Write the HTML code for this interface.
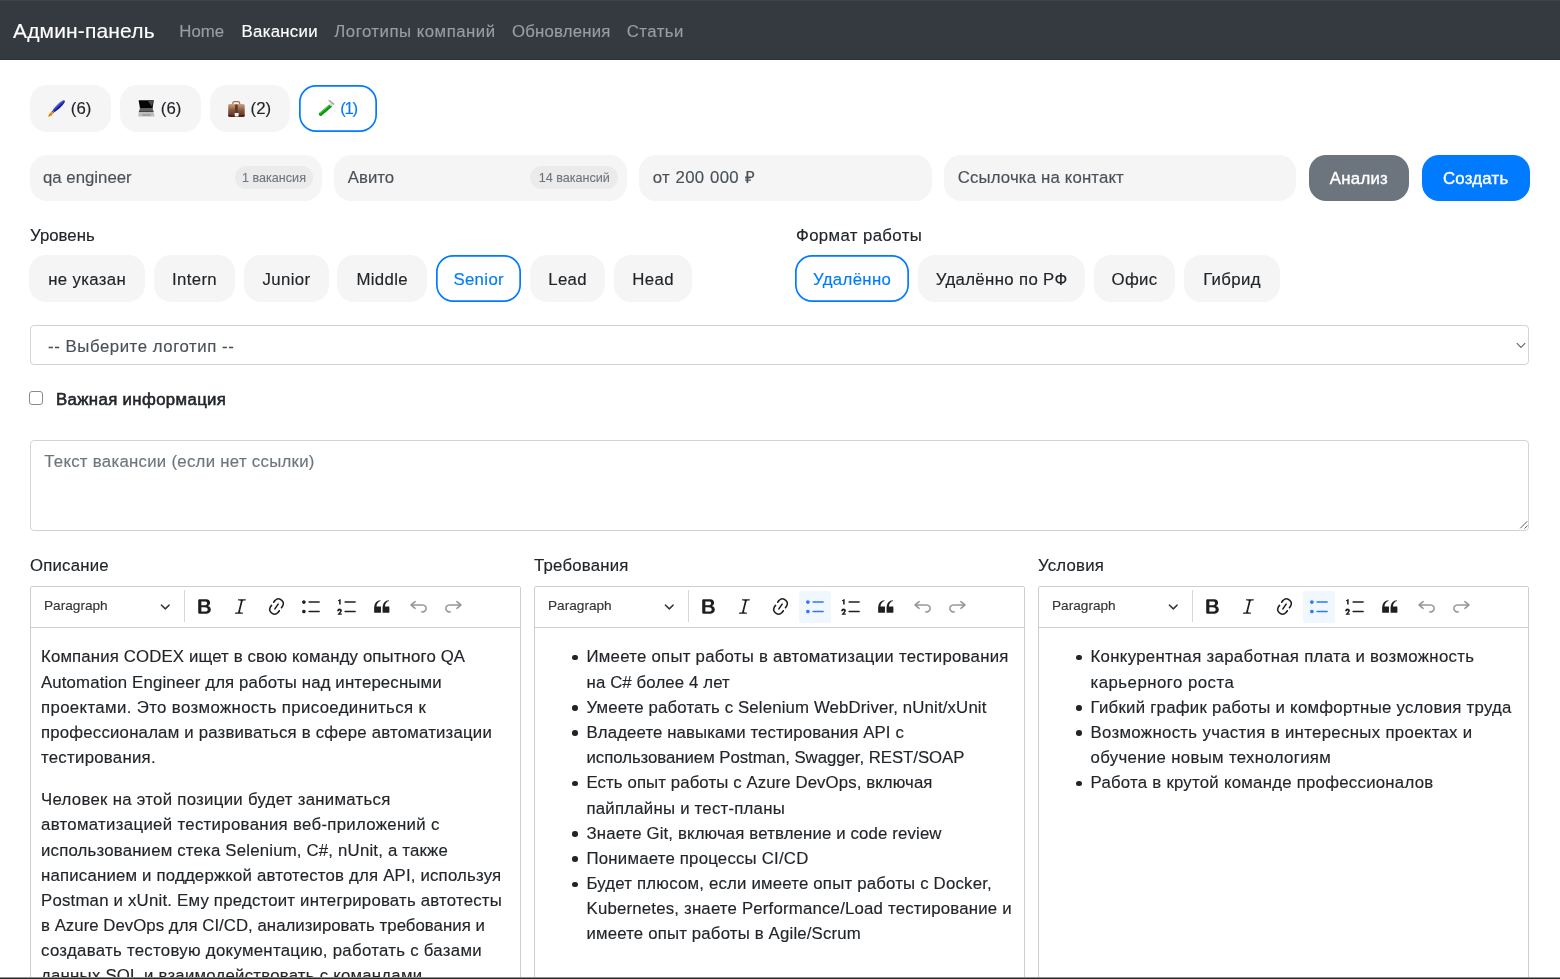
<!DOCTYPE html>
<html lang="ru">
<head>
<meta charset="utf-8">
<title>Админ-панель</title>
<style>
*{box-sizing:border-box;margin:0;padding:0}
html,body{width:1560px;height:979px;overflow:hidden;background:#fff}
body{font-family:"Liberation Sans",sans-serif;font-size:16.8px;color:#212529;position:relative;-webkit-text-stroke:.15px;paint-order:stroke fill}
.wrap{position:absolute;left:0;top:0;width:1560px;height:979px;overflow:hidden;will-change:transform}
.abs{position:absolute}
.nav{left:0;top:0;width:1560px;height:60px;background:#343a40;border-top:1px solid #414243;border-bottom:1px solid #2c3136}
.nav span{position:absolute;white-space:nowrap;line-height:20px}
.brand{left:13px;top:20px;font-size:21px;color:#fff}
.nl{top:21px;font-size:16.8px;color:#9a9da0}
.nl.act{color:#fff}
.pill{position:absolute;height:46px;border-radius:17px;background:#f5f5f5;display:flex;align-items:center;justify-content:center;white-space:nowrap;font-size:16.8px;color:#212529}
.pill.p2{top:255.300px;height:46.300px;padding-top:2.800px;letter-spacing:.350px}
.pill.sel{background:#fff;box-shadow:inset 0 0 0 1.7px #007bff;color:#007bff}
.pill .em{position:absolute;top:14.700px;width:17px;height:17px}
.pill .pt{position:absolute;top:1.3px;line-height:46.500px}
.inp{position:absolute;top:155px;height:45.7px;border-radius:17px;background:#f5f5f5;font-size:16.8px;color:#212529}
.inp .t{position:absolute;left:13.5px;top:13.100px;line-height:20px;white-space:nowrap;color:#495057}
.inp .b{position:absolute;right:9px;top:11.3px;height:23px;line-height:25px;text-align:center;-webkit-text-stroke:.1px;border-radius:11.5px;background:#ebebec;color:#6c757d;font-size:12.6px;white-space:nowrap}
.btn{position:absolute;top:154.700px;height:46.200px;border-radius:17px;color:#fff;display:flex;align-items:center;justify-content:center;font-size:16.8px;padding-top:2.800px;letter-spacing:.25px;-webkit-text-stroke:.4px}
.lbl{position:absolute;line-height:20px;white-space:nowrap;font-size:16.8px}
.sel-box{left:29.5px;top:324.5px;width:1499.500px;height:40.2px;border:1px solid #ced4da;border-radius:4px;background:#fff}
.ta{left:29.500px;top:440px;width:1499.500px;height:91px;border:1px solid #ced4da;border-radius:4px;background:#fff}
.ed{position:absolute;top:586px;width:491px;height:400px;border:1px solid #ccced1;border-radius:2px;background:#fff}
.ed .tb{position:absolute;left:0;top:0;width:100%;height:41px;border-bottom:1px solid #ccced1}
.ed .ct{position:absolute;left:0;top:42px;width:100%;font-size:16.8px;line-height:25.2px;white-space:nowrap;color:#212529}
.tb .pg{position:absolute;left:13px;top:10.3px;font-size:13.65px;line-height:18px;color:#333;white-space:nowrap}
.tb .chev{position:absolute;left:128.7px;top:14.4px;width:10.5px;height:10.5px;fill:#333}
.tb .sep{position:absolute;left:152.8px;top:3.300px;width:1px;height:32px;background:#d6d8db}
.tb .ic{position:absolute;top:8.7px;width:21px;height:21px;fill:#1f1f1f}
.tb .ic.dis{fill:#333;opacity:.5}
.tb .ic.act{fill:#2977ff}
.tb .on{position:absolute;top:4px;width:32px;height:32px;border-radius:2px;background:#f0f7ff}
.ct p{margin:0 0 16.8px 0}
.ct .ln{display:block;height:25.2px}
.ct{padding:15.4px 0 0 10px}
.ct ul{list-style:none;padding-left:41.500px}
.ct li{position:relative}
.ct li:before{content:"";position:absolute;left:-14.5px;top:10.5px;width:5.6px;height:5.6px;border-radius:50%;background:#212529}
.selchev{position:absolute;left:1484px;top:13px;width:12px;height:12px}
.cb{left:29.200px;top:391px;width:13.900px;height:13.900px;border:1px solid #8a8a8a;border-radius:3px;background:#fff}
.sb{-webkit-text-stroke:.55px #212529;letter-spacing:.36px}
.botline{left:0;top:977px;width:1560px;height:2px;background:linear-gradient(#8d8d8d 0,#8d8d8d 50%,#2b2b2b 50%)}
</style>
</head>
<body>
<div class="wrap">
<div class="abs nav">
<span class="brand" style="letter-spacing:.16px">Админ-панель</span>
<span class="nl" style="left:179.300px">Home</span>
<span class="nl act" style="left:241.500px;letter-spacing:.3px">Вакансии</span>
<span class="nl" style="left:334.300px;letter-spacing:.5px">Логотипы компаний</span>
<span class="nl" style="left:512px;letter-spacing:.2px">Обновления</span>
<span class="nl" style="left:626.800px;letter-spacing:.45px">Статьи</span>
</div>

<!-- tag pills -->
<div class="pill" style="left:29.5px;top:85px;width:81.3px;height:46.5px"><svg class="em" style="left:18.8px" viewBox="0 0 17 17"><defs><linearGradient id="gb" gradientUnits="userSpaceOnUse" x1="8.300" y1="3.300" x2="11.600" y2="7"><stop offset="0" stop-color="#b4c6fa"/><stop offset=".45" stop-color="#4a63de"/><stop offset="1" stop-color="#12128c"/></linearGradient></defs><path d="M4.600 10.300C7 6.500 12 1.300 15.500.3c1.500-.2 1.600 1.300.9 2.400C13.600 6.700 9.200 10.700 6.300 12Z" fill="url(#gb)"/><path d="M4.500 10.400 6.400 12.100 5.300 13.300 3.500 11.600Z" fill="#55534f"/><path d="M3.800 11.600 5.300 13C4.700 14.900 2.700 16.500.4 16.700.6 14.600 2 12.600 3.800 11.600Z" fill="#ee9418"/><path d="M2.300 13.300 3.700 14.600C2.900 15.600 1.700 16.400.4 16.700.7 15.400 1.400 14.200 2.300 13.300Z" fill="#d97a0a"/></svg><span class="pt" style="left:41.3px">(6)</span></div>
<div class="pill" style="left:119.5px;top:85px;width:81.3px;height:46.5px"><svg class="em" style="left:18.9px" viewBox="0 0 17 17"><defs><linearGradient id="gl" x1="0" y1="0" x2="1" y2="1"><stop offset="0" stop-color="#1a1a1a"/><stop offset="1" stop-color="#666"/></linearGradient></defs><path d="M.6.200H15.800L14.600 8.200H2Z" fill="#050505"/><path d="M9.800.9h5.300L14.200 6.800Z" fill="#4a4a4a"/><path d="M2 8.100H14.600L15.600 11.900H.8Z" fill="#5f5f5f"/><path d="M1 11.200H15.400l.2.800H.8Z" fill="#3a3a3a"/><path d="M.8 11.900H15.600L16.600 16.400H.2Z" fill="#bdbdbd"/><path d="M4.300 14.200h8.300v1.700H4.300Z" fill="#9e9e9e"/></svg><span class="pt" style="left:41.3px">(6)</span></div>
<div class="pill" style="left:209.6px;top:85px;width:80.8px;height:46.5px"><svg class="em" style="left:18.7px" viewBox="0 0 17 17"><defs><linearGradient id="gc" x1="0" y1="0" x2="0" y2="1"><stop offset="0" stop-color="#cfa180"/><stop offset=".5" stop-color="#85563e"/><stop offset="1" stop-color="#5c3020"/></linearGradient></defs><path d="M4.900 4.400V3q0-1.400 1.400-1.400h3.900q1.400 0 1.400 1.400v1.400" stroke="#a27353" stroke-width="1.300" fill="none"/><rect x=".2" y="4.100" width="16.500" height="12.600" rx="1.500" fill="url(#gc)"/><path d="M.2 15.200h16.500v.3q0 1.200-1.500 1.200H1.700Q.2 16.700.2 15.500Z" fill="#4a1508"/><rect x="7.100" y="4.500" width="2.600" height="8.800" rx="1" fill="#5a3a2a"/><rect x="6.700" y="13" width="3.900" height="3.500" rx=".4" fill="#f2f2f2"/></svg><span class="pt" style="left:41.0px">(2)</span></div>
<div class="pill sel" style="left:298.7px;top:85px;width:78.2px;height:46.5px"><svg class="em" style="left:19.3px" viewBox="0 0 17 17"><path d="M13.200 5 2.800 14" stroke="#eef3ee" stroke-width="4.200" stroke-linecap="round" fill="none"/><path d="M12.400 5.800 2.600 14.200" stroke="#0c9a0e" stroke-width="3.500" stroke-linecap="round" fill="none"/><path d="M10.800 5.600 2.300 12.900" stroke="#7fd283" stroke-width=".9" stroke-linecap="round" fill="none"/><path d="M11.300.7 15.500 4" stroke="#a9aaa9" stroke-width="1.700" stroke-linecap="round" fill="none"/><path d="M13.600 3.800 12 5.600" stroke="#d9ddd9" stroke-width="3" fill="none"/></svg><span class="pt" style="left:41.5px;letter-spacing:-1.3px">(1)</span></div>

<!-- inputs -->
<div class="inp" style="left:29.5px;width:292.5px"><span class="t">qa engineer</span><span class="b" style="width:78px">1 вакансия</span></div>
<div class="inp" style="left:334.3px;width:292.7px"><span class="t">Авито</span><span class="b" style="width:87.5px">14 вакансий</span></div>
<div class="inp" style="left:639.3px;width:292.7px"><span class="t" style="letter-spacing:.3px;word-spacing:.6px">от 200 000 ₽</span></div>
<div class="inp" style="left:944.400px;width:352px"><span class="t" style="left:13.300px;letter-spacing:.15px">Ссылочка на контакт</span></div>
<div class="btn" style="left:1308.700px;width:100.500px;background:#6c757d">Анализ</div>
<div class="btn" style="left:1421.700px;width:108px;background:#007bff">Создать</div>

<div class="lbl" style="left:30px;top:226.300px">Уровень</div>
<div class="lbl" style="left:796px;top:226.300px;letter-spacing:.38px">Формат работы</div>

<div class="pill p2" style="left:29.4px;width:115.6px">не указан</div>
<div class="pill p2" style="left:153.7px;width:81.7px">Intern</div>
<div class="pill p2" style="left:243.7px;width:85.6px">Junior</div>
<div class="pill p2" style="left:337.2px;width:90px">Middle</div>
<div class="pill p2 sel" style="left:436px;width:85.4px">Senior</div>
<div class="pill p2" style="left:530px;width:75.2px">Lead</div>
<div class="pill p2" style="left:614px;width:78.2px">Head</div>
<div class="pill p2 sel" style="left:795px;width:114.3px">Удалённо</div>
<div class="pill p2" style="left:918.3px;width:166.7px">Удалённо по РФ</div>
<div class="pill p2" style="left:1094px;width:81px">Офис</div>
<div class="pill p2" style="left:1184px;width:96px">Гибрид</div>

<div class="abs sel-box"><span class="lbl" style="left:17.500px;top:11.300px;color:#495057;letter-spacing:.56px">-- Выберите логотип --</span><svg class="selchev" viewBox="0 0 10 10"><path d="M1.500 3.500 5 7l3.500-3.500" fill="none" stroke="#63686e" stroke-width=".95" stroke-linecap="butt" stroke-linejoin="miter"/></svg></div>

<div class="abs cb"></div>
<div class="lbl sb" style="left:56px;top:390.200px">Важная информация</div>

<div class="abs ta"><span class="lbl" style="left:13.700px;top:11px;color:#6c757d;letter-spacing:.28px">Текст вакансии (если нет ссылки)</span><svg style="position:absolute;left:1486px;top:77px;width:12px;height:12px" viewBox="0 0 12 12"><path d="M3.300 10.300 10.300 3.200M7.500 10.500l3-2.800" stroke="#4a4a4a" stroke-width=".9" fill="none"/></svg></div>

<div class="lbl" style="left:30px;top:556.300px;letter-spacing:.2px">Описание</div>
<div class="lbl" style="left:534px;top:556.300px;letter-spacing:.2px">Требования</div>
<div class="lbl" style="left:1038px;top:556.300px;letter-spacing:.2px">Условия</div>

<div class="ed" style="left:30px"><div class="tb"><span class="pg">Paragraph</span><svg class="chev" viewBox="0 0 10 10"><path d="M.941 4.523a.75.75 0 1 1 1.06-1.06l3.006 3.005 3.005-3.005a.75.75 0 1 1 1.06 1.06l-3.549 3.55a.75.75 0 0 1-1.168-.136L.941 4.523z"/></svg><i class="sep"></i><svg class="ic" style="left:163.0px" viewBox="0 0 20 20"><path d="M10.187 17H5.773c-.637 0-1.092-.138-1.364-.415-.273-.277-.409-.718-.409-1.323V4.738c0-.617.14-1.062.419-1.332.279-.27.73-.406 1.354-.406h4.68c.69 0 1.288.041 1.793.124.506.083.96.242 1.36.478.341.197.644.447.906.75a3.262 3.262 0 0 1 .808 2.162c0 1.401-.722 2.426-2.167 3.075C15.05 10.175 16 11.315 16 13.01a3.756 3.756 0 0 1-2.296 3.504 6.1 6.1 0 0 1-1.517.377c-.571.073-1.238.11-2 .11zm-.217-6.217H7v4.087h3.069c1.977 0 2.965-.69 2.965-2.072 0-.707-.256-1.22-.768-1.537-.512-.319-1.277-.478-2.296-.478zM7 5.13v3.619h2.606c.729 0 1.292-.067 1.69-.2a1.6 1.6 0 0 0 .91-.765c.165-.267.247-.566.247-.897 0-.707-.26-1.176-.778-1.409-.519-.232-1.31-.348-2.375-.348H7z"/></svg><svg class="ic" style="left:198.7px" viewBox="0 0 20 20"><path d="m9.586 14.633.021.004c-.036.335.095.655.393.962.082.083.173.15.274.201h1.474a.6.6 0 1 1 0 1.2H5.304a.6.6 0 0 1 0-1.2h1.15c.474-.07.809-.182 1.005-.334.157-.122.291-.32.404-.597l2.416-9.55a1.053 1.053 0 0 0-.281-.823 1.12 1.12 0 0 0-.442-.296H8.15a.6.6 0 0 1 0-1.2h6.443a.6.6 0 1 1 0 1.2h-1.195c-.376.056-.65.155-.823.296-.215.175-.423.439-.623.79l-2.366 9.347z"/></svg><svg class="ic" style="left:235.2px" viewBox="0 0 20 20"><path d="m11.077 15 .991-1.416a.75.75 0 1 1 1.229.86l-1.148 1.64a.748.748 0 0 1-.217.206 5.251 5.251 0 0 1-8.503-5.955.741.741 0 0 1 .12-.274l1.147-1.639a.75.75 0 1 1 1.228.86L4.933 10.7l.006.003a3.75 3.75 0 0 0 6.132 4.294l.006.004zm5.494-5.335a.748.748 0 0 1-.12.274l-1.147 1.639a.75.75 0 1 1-1.228-.86l.86-1.23a3.75 3.75 0 0 0-6.144-4.301l-.86 1.229a.75.75 0 0 1-1.229-.86l1.148-1.64a.748.748 0 0 1 .217-.206 5.251 5.251 0 0 1 8.503 5.955zm-4.563-2.532a.75.75 0 0 1 .184 1.045l-3.155 4.505a.75.75 0 1 1-1.229-.86l3.155-4.506a.75.75 0 0 1 1.045-.184z"/></svg><svg class="ic" style="left:270.0px" viewBox="0 0 20 20"><path d="M7 5.75c0 .414.336.75.75.75h9.5a.75.75 0 1 0 0-1.5h-9.5a.75.75 0 0 0-.75.75zm-6 0C1 4.784 1.777 4 2.75 4c.966 0 1.75.777 1.75 1.75 0 .966-.777 1.75-1.75 1.75C1.784 7.5 1 6.723 1 5.75zm6 9c0 .414.336.75.75.75h9.5a.75.75 0 1 0 0-1.5h-9.5a.75.75 0 0 0-.75.75zm-6 0c0-.966.777-1.75 1.75-1.75.966 0 1.75.777 1.75 1.75 0 .966-.777 1.75-1.75 1.75C1.784 16.5 1 15.723 1 14.75z"/></svg><svg class="ic" style="left:305.7px" viewBox="0 0 20 20"><path d="M7 5.75c0 .414.336.75.75.75h9.5a.75.75 0 1 0 0-1.5h-9.5a.75.75 0 0 0-.75.75zM3.5 3v5H2V4.7H1v-1h.5c.5 0 .75-.25.75-.7H3.5zM.343 17.857l2.59-3.257H2.92a.6.6 0 1 0-1.04 0H.259a2.2 2.2 0 1 1 4.324 0L4.58 14.6l-1.55 2h1.555l-.001 1.257H.343zM7 14.75c0 .414.336.75.75.75h9.5a.75.75 0 1 0 0-1.5h-9.5a.75.75 0 0 0-.75.75z"/></svg><svg class="ic" style="left:340.2px" viewBox="0 0 20 20"><path d="M3 10.423a6.5 6.5 0 0 1 6.056-6.408l.038.67C6.448 5.423 5.354 7.663 5.22 10H9c.552 0 .5.432.5.986v4.511c0 .554-.448.503-1 .503h-5c-.552 0-.5-.449-.5-1.003v-4.574zm8 0a6.5 6.5 0 0 1 6.056-6.408l.038.67C14.448 5.423 13.354 7.663 13.22 10H17c.552 0 .5.432.5.986v4.511c0 .554-.448.503-1 .503h-5c-.552 0-.5-.449-.5-1.003v-4.574z"/></svg><svg class="ic dis" style="left:376.7px" viewBox="0 0 20 20"><path d="m5.042 9.367 2.189 1.837a.75.75 0 0 1-.965 1.149l-3.788-3.18a.747.747 0 0 1-.21-.284.75.75 0 0 1 .17-.945L6.23 4.762a.75.75 0 1 1 .964 1.15L4.863 7.866h8.917A.75.75 0 0 1 14 7.9a4 4 0 1 1-1.477 7.718l.344-1.489a2.5 2.5 0 1 0 1.094-4.73l.008-.032H5.042z"/></svg><svg class="ic dis" style="left:412.3px" viewBox="0 0 20 20"><path d="m14.958 9.367-2.189 1.837a.75.75 0 0 0 .965 1.149l3.788-3.18a.747.747 0 0 0 .21-.284.75.75 0 0 0-.17-.945L13.770 4.762a.75.75 0 1 0-.964 1.15l2.331 1.955H6.22A.75.75 0 0 0 6 7.9a4 4 0 1 0 1.477 7.718l-.344-1.489A2.5 2.5 0 1 1 6.039 9.4l-.008-.032h8.927z"/></svg></div><div class="ct"><p><span class="ln" style="letter-spacing:0.139px">Компания CODEX ищет в свою команду опытного QA</span><span class="ln" style="letter-spacing:0.141px">Automation Engineer для работы над интересными</span><span class="ln" style="letter-spacing:0.371px">проектами. Это возможность присоединиться к</span><span class="ln" style="letter-spacing:0.196px">профессионалам и развиваться в сфере автоматизации</span><span class="ln" style="letter-spacing:0.270px">тестирования.</span></p><p><span class="ln" style="letter-spacing:0.289px">Человек на этой позиции будет заниматься</span><span class="ln" style="letter-spacing:0.318px">автоматизацией тестирования веб-приложений с</span><span class="ln" style="letter-spacing:0.190px">использованием стека Selenium, C#, nUnit, а также</span><span class="ln" style="letter-spacing:0.190px">написанием и поддержкой автотестов для API, используя</span><span class="ln" style="letter-spacing:0.210px">Postman и xUnit. Ему предстоит интегрировать автотесты</span><span class="ln" style="letter-spacing:0.031px">в Azure DevOps для CI/CD, анализировать требования и</span><span class="ln" style="letter-spacing:0.297px">создавать тестовую документацию, работать с базами</span><span class="ln" style="letter-spacing:0.231px">данных SQL и взаимодействовать с командами</span></p></div></div>
<div class="ed" style="left:534px"><div class="tb"><span class="pg">Paragraph</span><svg class="chev" viewBox="0 0 10 10"><path d="M.941 4.523a.75.75 0 1 1 1.06-1.06l3.006 3.005 3.005-3.005a.75.75 0 1 1 1.06 1.06l-3.549 3.55a.75.75 0 0 1-1.168-.136L.941 4.523z"/></svg><i class="sep"></i><svg class="ic" style="left:163.0px" viewBox="0 0 20 20"><path d="M10.187 17H5.773c-.637 0-1.092-.138-1.364-.415-.273-.277-.409-.718-.409-1.323V4.738c0-.617.14-1.062.419-1.332.279-.27.73-.406 1.354-.406h4.68c.69 0 1.288.041 1.793.124.506.083.96.242 1.36.478.341.197.644.447.906.75a3.262 3.262 0 0 1 .808 2.162c0 1.401-.722 2.426-2.167 3.075C15.05 10.175 16 11.315 16 13.01a3.756 3.756 0 0 1-2.296 3.504 6.1 6.1 0 0 1-1.517.377c-.571.073-1.238.11-2 .11zm-.217-6.217H7v4.087h3.069c1.977 0 2.965-.69 2.965-2.072 0-.707-.256-1.22-.768-1.537-.512-.319-1.277-.478-2.296-.478zM7 5.13v3.619h2.606c.729 0 1.292-.067 1.69-.2a1.6 1.6 0 0 0 .91-.765c.165-.267.247-.566.247-.897 0-.707-.26-1.176-.778-1.409-.519-.232-1.31-.348-2.375-.348H7z"/></svg><svg class="ic" style="left:198.7px" viewBox="0 0 20 20"><path d="m9.586 14.633.021.004c-.036.335.095.655.393.962.082.083.173.15.274.201h1.474a.6.6 0 1 1 0 1.2H5.304a.6.6 0 0 1 0-1.2h1.15c.474-.07.809-.182 1.005-.334.157-.122.291-.32.404-.597l2.416-9.55a1.053 1.053 0 0 0-.281-.823 1.12 1.12 0 0 0-.442-.296H8.15a.6.6 0 0 1 0-1.2h6.443a.6.6 0 1 1 0 1.2h-1.195c-.376.056-.65.155-.823.296-.215.175-.423.439-.623.79l-2.366 9.347z"/></svg><svg class="ic" style="left:235.2px" viewBox="0 0 20 20"><path d="m11.077 15 .991-1.416a.75.75 0 1 1 1.229.86l-1.148 1.64a.748.748 0 0 1-.217.206 5.251 5.251 0 0 1-8.503-5.955.741.741 0 0 1 .12-.274l1.147-1.639a.75.75 0 1 1 1.228.86L4.933 10.7l.006.003a3.75 3.75 0 0 0 6.132 4.294l.006.004zm5.494-5.335a.748.748 0 0 1-.12.274l-1.147 1.639a.75.75 0 1 1-1.228-.86l.86-1.23a3.75 3.75 0 0 0-6.144-4.301l-.86 1.229a.75.75 0 0 1-1.229-.86l1.148-1.64a.748.748 0 0 1 .217-.206 5.251 5.251 0 0 1 8.503 5.955zm-4.563-2.532a.75.75 0 0 1 .184 1.045l-3.155 4.505a.75.75 0 1 1-1.229-.86l3.155-4.506a.75.75 0 0 1 1.045-.184z"/></svg><i class="on" style="left:264.4px"></i><svg class="ic act" style="left:270.0px" viewBox="0 0 20 20"><path d="M7 5.75c0 .414.336.75.75.75h9.5a.75.75 0 1 0 0-1.5h-9.5a.75.75 0 0 0-.75.75zm-6 0C1 4.784 1.777 4 2.75 4c.966 0 1.75.777 1.75 1.75 0 .966-.777 1.75-1.75 1.75C1.784 7.5 1 6.723 1 5.75zm6 9c0 .414.336.75.75.75h9.5a.75.75 0 1 0 0-1.5h-9.5a.75.75 0 0 0-.75.75zm-6 0c0-.966.777-1.75 1.75-1.75.966 0 1.75.777 1.75 1.75 0 .966-.777 1.75-1.75 1.75C1.784 16.5 1 15.723 1 14.75z"/></svg><svg class="ic" style="left:305.7px" viewBox="0 0 20 20"><path d="M7 5.75c0 .414.336.75.75.75h9.5a.75.75 0 1 0 0-1.5h-9.5a.75.75 0 0 0-.75.75zM3.5 3v5H2V4.7H1v-1h.5c.5 0 .75-.25.75-.7H3.5zM.343 17.857l2.59-3.257H2.92a.6.6 0 1 0-1.04 0H.259a2.2 2.2 0 1 1 4.324 0L4.58 14.6l-1.55 2h1.555l-.001 1.257H.343zM7 14.75c0 .414.336.75.75.75h9.5a.75.75 0 1 0 0-1.5h-9.5a.75.75 0 0 0-.75.75z"/></svg><svg class="ic" style="left:340.2px" viewBox="0 0 20 20"><path d="M3 10.423a6.5 6.5 0 0 1 6.056-6.408l.038.67C6.448 5.423 5.354 7.663 5.22 10H9c.552 0 .5.432.5.986v4.511c0 .554-.448.503-1 .503h-5c-.552 0-.5-.449-.5-1.003v-4.574zm8 0a6.5 6.5 0 0 1 6.056-6.408l.038.67C14.448 5.423 13.354 7.663 13.22 10H17c.552 0 .5.432.5.986v4.511c0 .554-.448.503-1 .503h-5c-.552 0-.5-.449-.5-1.003v-4.574z"/></svg><svg class="ic dis" style="left:376.7px" viewBox="0 0 20 20"><path d="m5.042 9.367 2.189 1.837a.75.75 0 0 1-.965 1.149l-3.788-3.18a.747.747 0 0 1-.21-.284.75.75 0 0 1 .17-.945L6.23 4.762a.75.75 0 1 1 .964 1.15L4.863 7.866h8.917A.75.75 0 0 1 14 7.9a4 4 0 1 1-1.477 7.718l.344-1.489a2.5 2.5 0 1 0 1.094-4.73l.008-.032H5.042z"/></svg><svg class="ic dis" style="left:412.3px" viewBox="0 0 20 20"><path d="m14.958 9.367-2.189 1.837a.75.75 0 0 0 .965 1.149l3.788-3.18a.747.747 0 0 0 .21-.284.75.75 0 0 0-.17-.945L13.770 4.762a.75.75 0 1 0-.964 1.15l2.331 1.955H6.22A.75.75 0 0 0 6 7.9a4 4 0 1 0 1.477 7.718l-.344-1.489A2.5 2.5 0 1 1 6.039 9.4l-.008-.032h8.927z"/></svg></div><div class="ct"><ul><li><span class="ln" style="letter-spacing:0.252px">Имеете опыт работы в автоматизации тестирования</span><span class="ln" style="letter-spacing:0.123px">на C# более 4 лет</span></li><li><span class="ln" style="letter-spacing:0.145px">Умеете работать с Selenium WebDriver, nUnit/xUnit</span></li><li><span class="ln" style="letter-spacing:0.111px">Владеете навыками тестирования API с</span><span class="ln" style="letter-spacing:-0.043px">использованием Postman, Swagger, REST/SOAP</span></li><li><span class="ln" style="letter-spacing:0.098px">Есть опыт работы с Azure DevOps, включая</span><span class="ln" style="letter-spacing:0.226px">пайплайны и тест-планы</span></li><li><span class="ln" style="letter-spacing:0.140px">Знаете Git, включая ветвление и code review</span></li><li><span class="ln" style="letter-spacing:0.214px">Понимаете процессы CI/CD</span></li><li><span class="ln" style="letter-spacing:0.197px">Будет плюсом, если имеете опыт работы с Docker,</span><span class="ln" style="letter-spacing:0.195px">Kubernetes, знаете Performance/Load тестирование и</span><span class="ln" style="letter-spacing:0.169px">имеете опыт работы в Agile/Scrum</span></li></ul></div></div>
<div class="ed" style="left:1038px"><div class="tb"><span class="pg">Paragraph</span><svg class="chev" viewBox="0 0 10 10"><path d="M.941 4.523a.75.75 0 1 1 1.06-1.06l3.006 3.005 3.005-3.005a.75.75 0 1 1 1.06 1.06l-3.549 3.55a.75.75 0 0 1-1.168-.136L.941 4.523z"/></svg><i class="sep"></i><svg class="ic" style="left:163.0px" viewBox="0 0 20 20"><path d="M10.187 17H5.773c-.637 0-1.092-.138-1.364-.415-.273-.277-.409-.718-.409-1.323V4.738c0-.617.14-1.062.419-1.332.279-.27.73-.406 1.354-.406h4.68c.69 0 1.288.041 1.793.124.506.083.96.242 1.36.478.341.197.644.447.906.75a3.262 3.262 0 0 1 .808 2.162c0 1.401-.722 2.426-2.167 3.075C15.05 10.175 16 11.315 16 13.01a3.756 3.756 0 0 1-2.296 3.504 6.1 6.1 0 0 1-1.517.377c-.571.073-1.238.11-2 .11zm-.217-6.217H7v4.087h3.069c1.977 0 2.965-.69 2.965-2.072 0-.707-.256-1.22-.768-1.537-.512-.319-1.277-.478-2.296-.478zM7 5.13v3.619h2.606c.729 0 1.292-.067 1.69-.2a1.6 1.6 0 0 0 .91-.765c.165-.267.247-.566.247-.897 0-.707-.26-1.176-.778-1.409-.519-.232-1.31-.348-2.375-.348H7z"/></svg><svg class="ic" style="left:198.7px" viewBox="0 0 20 20"><path d="m9.586 14.633.021.004c-.036.335.095.655.393.962.082.083.173.15.274.201h1.474a.6.6 0 1 1 0 1.2H5.304a.6.6 0 0 1 0-1.2h1.15c.474-.07.809-.182 1.005-.334.157-.122.291-.32.404-.597l2.416-9.55a1.053 1.053 0 0 0-.281-.823 1.12 1.12 0 0 0-.442-.296H8.15a.6.6 0 0 1 0-1.2h6.443a.6.6 0 1 1 0 1.2h-1.195c-.376.056-.65.155-.823.296-.215.175-.423.439-.623.79l-2.366 9.347z"/></svg><svg class="ic" style="left:235.2px" viewBox="0 0 20 20"><path d="m11.077 15 .991-1.416a.75.75 0 1 1 1.229.86l-1.148 1.64a.748.748 0 0 1-.217.206 5.251 5.251 0 0 1-8.503-5.955.741.741 0 0 1 .12-.274l1.147-1.639a.75.75 0 1 1 1.228.86L4.933 10.7l.006.003a3.75 3.75 0 0 0 6.132 4.294l.006.004zm5.494-5.335a.748.748 0 0 1-.12.274l-1.147 1.639a.75.75 0 1 1-1.228-.86l.86-1.23a3.75 3.75 0 0 0-6.144-4.301l-.86 1.229a.75.75 0 0 1-1.229-.86l1.148-1.64a.748.748 0 0 1 .217-.206 5.251 5.251 0 0 1 8.503 5.955zm-4.563-2.532a.75.75 0 0 1 .184 1.045l-3.155 4.505a.75.75 0 1 1-1.229-.86l3.155-4.506a.75.75 0 0 1 1.045-.184z"/></svg><i class="on" style="left:264.4px"></i><svg class="ic act" style="left:270.0px" viewBox="0 0 20 20"><path d="M7 5.75c0 .414.336.75.75.75h9.5a.75.75 0 1 0 0-1.5h-9.5a.75.75 0 0 0-.75.75zm-6 0C1 4.784 1.777 4 2.75 4c.966 0 1.75.777 1.75 1.75 0 .966-.777 1.75-1.75 1.75C1.784 7.5 1 6.723 1 5.75zm6 9c0 .414.336.75.75.75h9.5a.75.75 0 1 0 0-1.5h-9.5a.75.75 0 0 0-.75.75zm-6 0c0-.966.777-1.75 1.75-1.75.966 0 1.75.777 1.75 1.75 0 .966-.777 1.75-1.75 1.75C1.784 16.5 1 15.723 1 14.75z"/></svg><svg class="ic" style="left:305.7px" viewBox="0 0 20 20"><path d="M7 5.75c0 .414.336.75.75.75h9.5a.75.75 0 1 0 0-1.5h-9.5a.75.75 0 0 0-.75.75zM3.5 3v5H2V4.7H1v-1h.5c.5 0 .75-.25.75-.7H3.5zM.343 17.857l2.59-3.257H2.92a.6.6 0 1 0-1.04 0H.259a2.2 2.2 0 1 1 4.324 0L4.58 14.6l-1.55 2h1.555l-.001 1.257H.343zM7 14.75c0 .414.336.75.75.75h9.5a.75.75 0 1 0 0-1.5h-9.5a.75.75 0 0 0-.75.75z"/></svg><svg class="ic" style="left:340.2px" viewBox="0 0 20 20"><path d="M3 10.423a6.5 6.5 0 0 1 6.056-6.408l.038.67C6.448 5.423 5.354 7.663 5.22 10H9c.552 0 .5.432.5.986v4.511c0 .554-.448.503-1 .503h-5c-.552 0-.5-.449-.5-1.003v-4.574zm8 0a6.5 6.5 0 0 1 6.056-6.408l.038.67C14.448 5.423 13.354 7.663 13.22 10H17c.552 0 .5.432.5.986v4.511c0 .554-.448.503-1 .503h-5c-.552 0-.5-.449-.5-1.003v-4.574z"/></svg><svg class="ic dis" style="left:376.7px" viewBox="0 0 20 20"><path d="m5.042 9.367 2.189 1.837a.75.75 0 0 1-.965 1.149l-3.788-3.18a.747.747 0 0 1-.21-.284.75.75 0 0 1 .17-.945L6.23 4.762a.75.75 0 1 1 .964 1.15L4.863 7.866h8.917A.75.75 0 0 1 14 7.9a4 4 0 1 1-1.477 7.718l.344-1.489a2.5 2.5 0 1 0 1.094-4.73l.008-.032H5.042z"/></svg><svg class="ic dis" style="left:412.3px" viewBox="0 0 20 20"><path d="m14.958 9.367-2.189 1.837a.75.75 0 0 0 .965 1.149l3.788-3.18a.747.747 0 0 0 .21-.284.75.75 0 0 0-.17-.945L13.770 4.762a.75.75 0 1 0-.964 1.15l2.331 1.955H6.22A.75.75 0 0 0 6 7.9a4 4 0 1 0 1.477 7.718l-.344-1.489A2.5 2.5 0 1 1 6.039 9.4l-.008-.032h8.927z"/></svg></div><div class="ct"><ul><li><span class="ln" style="letter-spacing:0.306px">Конкурентная заработная плата и возможность</span><span class="ln" style="letter-spacing:0.485px">карьерного роста</span></li><li><span class="ln" style="letter-spacing:0.263px">Гибкий график работы и комфортные условия труда</span></li><li><span class="ln" style="letter-spacing:0.325px">Возможность участия в интересных проектах и</span><span class="ln" style="letter-spacing:0.333px">обучение новым технологиям</span></li><li><span class="ln" style="letter-spacing:0.252px">Работа в крутой команде профессионалов</span></li></ul></div></div>

<div class="abs botline"></div>
</div>
</body>
</html>
